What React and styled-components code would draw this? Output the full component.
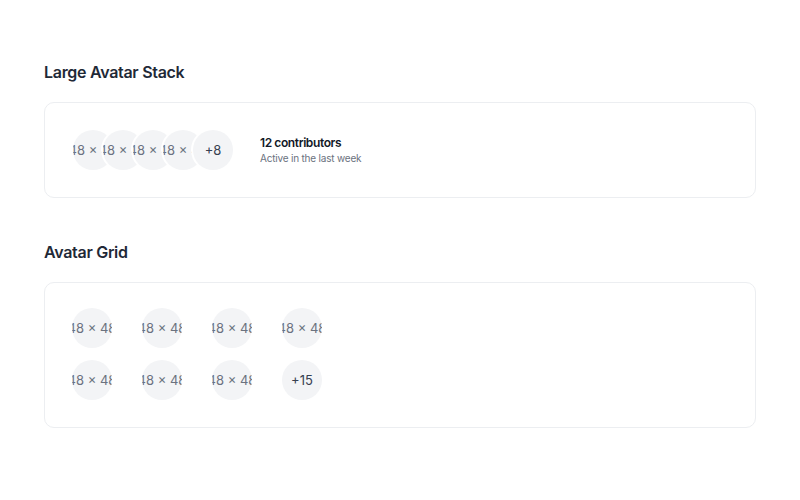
import styled, { createGlobalStyle } from "styled-components"

const GlobalStyle = createGlobalStyle`
  body {
    margin: 0;
    background: #ffffff;
    font-family: "Segoe UI", Inter, "Noto Sans", sans-serif;
    color: #1f2937;
  }
`

const stack = ["48 × 48", "48 × 48", "48 × 48", "48 × 48"]
const grid = ["48 × 48", "48 × 48", "48 × 48", "48 × 48", "48 × 48", "48 × 48", "48 × 48"]

const App = () => {
  return (
    <>
      <GlobalStyle />
      <Page>
        <Section>
          <Title>Large Avatar Stack</Title>
          <StackCard>
            <Stack>
              {stack.map((t, i) => (
                <StackAvatar key={i}>
                  <AltText>{t}</AltText>
                </StackAvatar>
              ))}
              <StackAvatar>
                <More>+8</More>
              </StackAvatar>
            </Stack>
            <Info>
              <Count>12 contributors</Count>
              <Sub>Active in the last week</Sub>
            </Info>
          </StackCard>
        </Section>
        <Section>
          <Title>Avatar Grid</Title>
          <GridCard>
            <Grid>
              {grid.map((t, i) => (
                <Avatar key={i}>
                  <AltText>{t}</AltText>
                </Avatar>
              ))}
              <Avatar>
                <More>+15</More>
              </Avatar>
            </Grid>
          </GridCard>
        </Section>
      </Page>
    </>
  )
}

export default App

const Page = styled.div`
  padding: 60px 44px;
  display: flex;
  flex-direction: column;
  gap: 42px;
`
const Section = styled.section`
  display: flex;
  flex-direction: column;
  gap: 18px;
`
const Title = styled.h2`
  margin: 0;
  font-size: 16px;
  line-height: 24px;
  font-weight: 600;
  letter-spacing: -0.3px;
  color: #1f2937;
`
const Card = styled.div`
  border: 1px solid #eceef1;
  border-radius: 10px;
  background: #fff;
`
const StackCard = styled(Card)`
  display: flex;
  align-items: center;
  padding: 27px 28px;
`
const GridCard = styled(Card)`
  padding: 25px 27px 27px;
`
const Stack = styled.div`
  display: flex;
  align-items: center;
`
const Avatar = styled.div`
  width: 40px;
  height: 40px;
  border-radius: 50%;
  background: #f3f4f6;
  overflow: hidden;
  display: flex;
  align-items: center;
  justify-content: center;
  position: relative;
  flex-shrink: 0;
`
const StackAvatar = styled(Avatar)`
  box-shadow: 0 0 0 2px #ffffff;
  &:not(:first-child) {
    margin-left: -10px;
  }
`
const AltText = styled.span`
  white-space: nowrap;
  font-size: 13px;
  color: #6b7280;
`
const More = styled.span`
  font-size: 13px;
  color: #374151;
`
const Info = styled.div`
  margin-left: 27px;
  display: flex;
  flex-direction: column;
`
const Count = styled.div`
  font-size: 12px;
  font-weight: 600;
  letter-spacing: -0.4px;
  line-height: 16px;
  color: #111827;
`
const Sub = styled.div`
  font-size: 10px;
  letter-spacing: -0.2px;
  line-height: 14px;
  color: #6b7280;
`
const Grid = styled.div`
  display: grid;
  grid-template-columns: repeat(4, 40px);
  column-gap: 30px;
  row-gap: 12px;
`
